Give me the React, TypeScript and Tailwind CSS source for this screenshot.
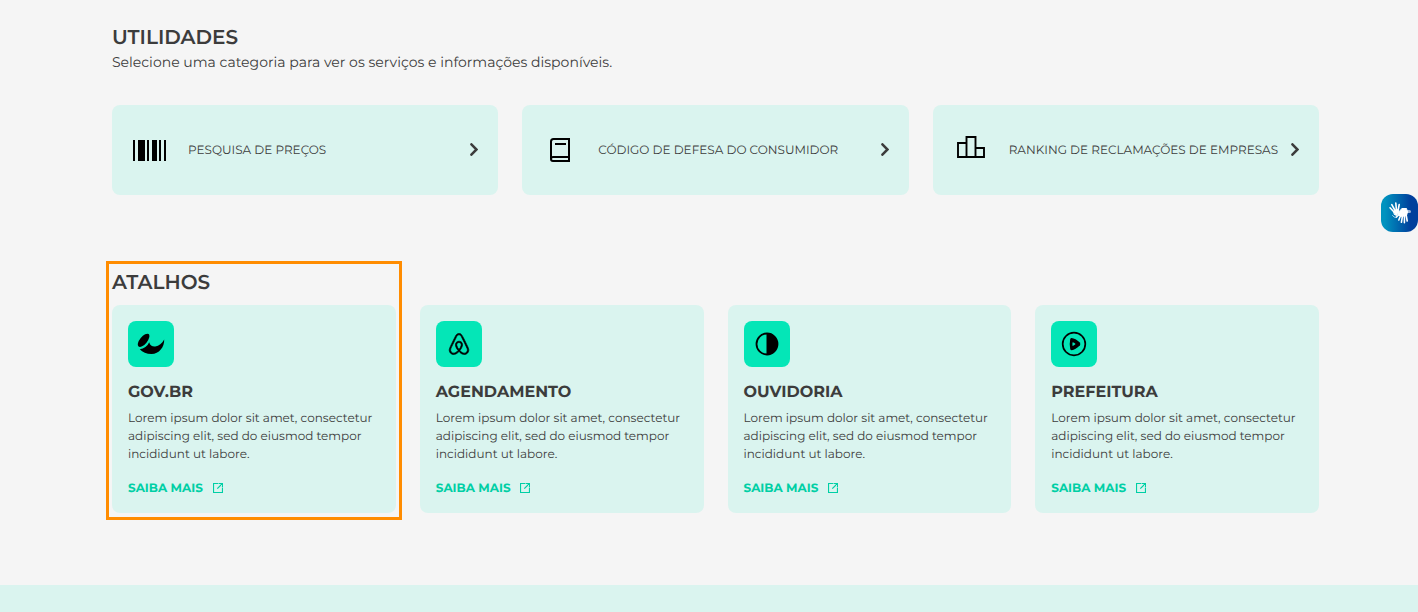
import type { ReactNode } from "react";
import { FaAirbnb } from "react-icons/fa";

type Utility = { label: string; icon: ReactNode };
type Shortcut = { title: string; icon: ReactNode };

const BarcodeIcon = () => (
  <svg width="34" height="21" viewBox="0 0 34 21" shapeRendering="crispEdges" fill="#000">
    <rect x="0" y="0" width="2" height="21" />
    <rect x="5" y="0" width="7" height="21" />
    <rect x="14" y="0" width="2" height="21" />
    <rect x="19" y="0" width="5" height="21" />
    <rect x="26" y="0" width="2" height="21" />
    <rect x="31" y="0" width="2" height="21" />
  </svg>
);

const BookIcon = () => (
  <svg width="20" height="24" viewBox="0 0 20 24" fill="none" stroke="#000" strokeWidth="2">
    <path d="M19 1H3.500Q1 1 1 3.500V21Q1 23 3 23H19Z" />
    <path d="M1 21Q1 19 3 19H19M5 6H16" />
  </svg>
);

const RankingIcon = () => (
  <svg width="28" height="22" viewBox="0 0 28 22" fill="none" stroke="#000" strokeWidth="1.900">
    <path d="M1 21V7H9.500V1H18.500V12H27V21ZM9.500 7V21M18.500 12V21" />
  </svg>
);

const ChevronIcon = () => (
  <svg width="8" height="13" viewBox="0 0 8 13" fill="none" stroke="#3c3c3c" strokeWidth="2.500">
    <path d="M1.400 1.300L6.500 6.500L1.400 11.700" strokeLinecap="round" />
  </svg>
);

const ExternalIcon = () => (
  <svg width="10" height="10" viewBox="0 0 10 10" fill="none" stroke="#00cfa5" strokeWidth="1.200">
    <path d="M5 .5H.5V9.500H9.500V5M5.500 .5H9.500V4.500M4.300 5.700L9.500 .5" />
  </svg>
);

const BowlIcon = () => (
  <svg width="28" height="22" viewBox="0 0 28 22" fill="#000">
    <ellipse cx="6.600" cy="7.300" rx="3.700" ry="8" transform="rotate(39 6.600 7.300)" />
    <path d="M2.800 16.300C7 15.500 10.400 13.200 12.200 9.200C13 12.500 15.500 13.900 18.300 13.500C22 13 25 10.300 27.200 6.500C27.500 14 22 21 14.500 21C9.600 21 5.500 19.500 2.800 16.300Z" />
  </svg>
);

const ContrastIcon = () => (
  <svg width="24" height="24" viewBox="0 0 24 24">
    <circle cx="12" cy="12" r="10.500" fill="none" stroke="#000" strokeWidth="1.800" />
    <path d="M11.500 1A11 11 0 0 1 11.500 23Z" />
  </svg>
);

const PlayIcon = () => (
  <svg width="26" height="26" viewBox="0 0 26 26">
    <circle cx="13" cy="13" r="11.300" fill="none" stroke="#000" strokeWidth="1.700" />
    <path d="M10.500 7Q14.500 7.400 18.800 11.600Q19.900 13.100 18.800 14.500Q14.500 18.700 10.700 19.300Q9.600 19.300 9.200 18Q8.200 13 9.200 8.200Q9.600 7 10.500 7Z" />
    <path d="M11.600 11.200Q13 11.500 14.600 13Q13 14.600 11.600 14.900Q11.200 13 11.600 11.200Z" fill="#04e6b7" />
  </svg>
);

const HandsIcon = () => (
  <svg width="24" height="26" viewBox="0 0 24 26" fill="none" stroke="#fff" strokeLinecap="round" strokeLinejoin="round">
    <path d="M2 7.800L6.500 12.500M3.800 4.600L7.300 11M7.800 3L8.500 10.500M11.200 4.500L10 11" strokeWidth="1.600" />
    <path d="M6 11L9.500 9.500L11 12L8.500 15.500L6.500 14.500Z" fill="#fff" strokeWidth="1" />
    <path d="M4.500 15.500Q6 18 8.500 17.500" strokeWidth="1" opacity=".7" />
    <path d="M11.500 11L14 8.500L18.500 8.500L19.500 12L18.500 15.500L13.500 16.500L10.500 15Z" fill="#fff" strokeWidth="1" />
    <path d="M12.500 13L8.500 17M13 14.500L10.800 20M14.700 14.500L13.400 22.300M16.500 14.500L16.400 22.700M18 14L19.200 21" strokeWidth="1.600" />
    <path d="M19 11.500H21.500" strokeWidth="3" opacity=".6" />
  </svg>
);

const utilities: Utility[] = [
  { label: "PESQUISA DE PREÇOS", icon: <div className="mt-px"><BarcodeIcon /></div> },
  { label: "CÓDIGO DE DEFESA DO CONSUMIDOR", icon: <BookIcon /> },
  { label: "RANKING DE RECLAMAÇÕES DE EMPRESAS", icon: <div className="-mt-1.5"><RankingIcon /></div> },
];

const shortcuts: Shortcut[] = [
  { title: "GOV.BR", icon: <BowlIcon /> },
  { title: "AGENDAMENTO", icon: <FaAirbnb size={24} stroke="#000" strokeWidth={14} /> },
  { title: "OUVIDORIA", icon: <ContrastIcon /> },
  { title: "PREFEITURA", icon: <PlayIcon /> },
];

export default function App() {
  return (
    <div className="relative flex h-[612px] w-full flex-col overflow-hidden bg-[#f5f5f5] font-['Montserrat','Inter',sans-serif] text-[#3c3c3c] [text-rendering:geometricPrecision]">
      <main className="ml-28 w-[1207px] flex-1 pt-[25px]">
        <h2 className="h-6 pt-px text-[20px] leading-6 font-semibold whitespace-nowrap">UTILIDADES</h2>
        <p className="mt-0.5 h-[22px] text-[14px] leading-[22px] tracking-[0.01px] whitespace-nowrap">
          Selecione uma categoria para ver os serviços e informações disponíveis.
        </p>
        <div className="mt-8 grid grid-cols-3 gap-6">
          {utilities.map((u) => (
            <a key={u.label} className="flex h-[90px] items-center rounded-lg bg-[#daf4ef] pr-5">
              <span className="flex w-[76px] items-center justify-center">{u.icon}</span>
              <span className="flex-1 pt-px text-[12px] leading-[18px] font-normal tracking-[0.01px] whitespace-nowrap">{u.label}</span>
              <span className="pb-px"><ChevronIcon /></span>
            </a>
          ))}
        </div>
        <section className="relative mt-[75px]">
          <div className="pointer-events-none absolute -top-[9px] -left-1.5 h-[259px] w-[296px] border-3 border-[#ff8c00]" />
          <h2 className="h-6 pt-px text-[20px] leading-6 font-semibold whitespace-nowrap">ATALHOS</h2>
          <div className="mt-[11px] grid grid-cols-4 gap-6">
            {shortcuts.map((s) => (
              <article key={s.title} className="h-52 rounded-lg bg-[#daf4ef] p-4">
                <div className="flex size-[46px] items-center justify-center rounded-lg bg-[#04e6b7] text-black">{s.icon}</div>
                <h3 className="mt-4 h-5 text-[16px] leading-5 font-bold">{s.title}</h3>
                <p className="mt-[7px] text-[12px] leading-[18px] whitespace-nowrap">
                  Lorem ipsum dolor sit amet, consectetur
                  <br />
                  adipiscing elit, sed do eiusmod tempor
                  <br />
                  incididunt ut labore.
                </p>
                <a className="mt-[15px] flex h-[18px] items-center text-[12px] leading-[18px] font-bold text-[#00cfa5]">
                  <span className="w-[84.700px] pt-0.5 whitespace-nowrap">SAIBA MAIS</span>
                  <ExternalIcon />
                </a>
              </article>
            ))}
          </div>
        </section>
      </main>
      <footer className="h-[27px] bg-[#daf4ef]" />
      <button className="absolute top-[194px] right-0 flex h-[38px] w-[37px] items-center justify-center rounded-[12px] bg-linear-to-r from-[#0093bf] from-10% to-[#003f9c] to-80% text-white">
        <HandsIcon />
      </button>
    </div>
  );
}
